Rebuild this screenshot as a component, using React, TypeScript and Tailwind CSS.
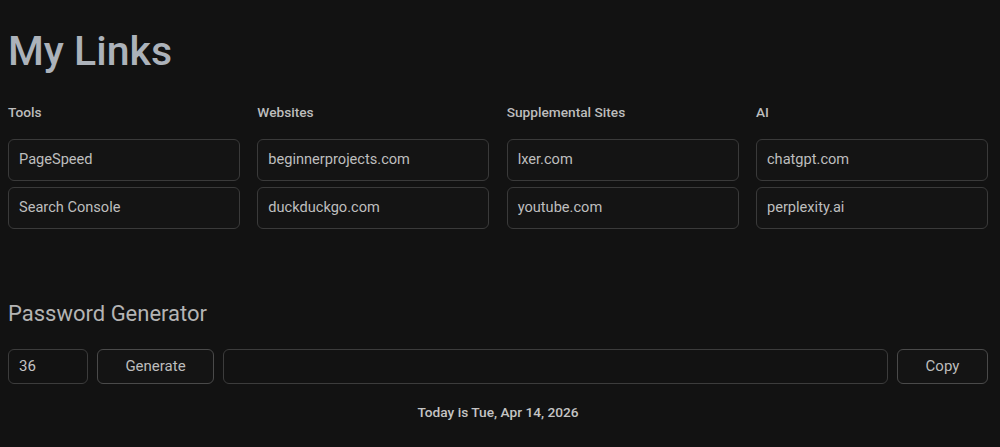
const groups = [
  { title: "Tools", links: ["PageSpeed", "Search Console"] },
  { title: "Websites", links: ["beginnerprojects.com", "duckduckgo.com"] },
  { title: "Supplemental Sites", links: ["lxer.com", "youtube.com"] },
  { title: "AI", links: ["chatgpt.com", "perplexity.ai"] },
];

export default function App() {
  return (
    <div
      className="min-h-screen bg-[#121212] pl-2 pr-3 pt-[26px]"
      style={{ fontFamily: "Roboto, 'Liberation Sans', sans-serif" }}
    >
      <h1 className="text-[41px] leading-[50px] font-medium text-[#acb2ba]">My Links</h1>

      <div className="mt-[26px] grid grid-cols-4 gap-x-[17.33px]">
        {groups.map((group) => (
          <div key={group.title}>
            <h2 className="text-[13.7px] leading-[20px] font-medium text-[#bdbdbd]">{group.title}</h2>
            <div className="mt-[17px] flex flex-col gap-[6.5px]">
              {group.links.map((link) => (
                <a
                  key={link}
                  href="#"
                  className="flex h-[41.5px] items-center rounded-[6px] border border-[#3a3a3a] bg-[#141414] px-[10px] text-[14.6px] text-[#bebebe]"
                >
                  {link}
                </a>
              ))}
            </div>
          </div>
        ))}
      </div>

      <h2 className="mt-[71px] text-[22px] leading-[28px] text-[#b4b4b4]">Password Generator</h2>

      <div className="mt-[21px] flex h-[35.5px] gap-[9px]">
        <input
          defaultValue="36"
          className="w-[80px] rounded-[6px] border border-[#3c3c3c] bg-[#121212] px-[10px] text-[15px] text-[#c4c4c4] outline-none"
        />
        <button className="w-[117px] rounded-[6px] border border-[#4a4a4a] bg-[#141414] text-[15px] text-[#bdbdbd]">
          Generate
        </button>
        <input className="flex-1 rounded-[6px] border border-[#3c3c3c] bg-[#121212] px-[10px] text-[15px] text-[#c4c4c4] outline-none" />
        <button className="w-[91px] rounded-[6px] border border-[#4a4a4a] bg-[#141414] text-[15px] text-[#bdbdbd]">
          Copy
        </button>
      </div>

      <p className="mt-[18px] text-center text-[13.7px] leading-[20px] font-medium text-[#c4c4c4]">
        Today is Tue, Apr 14, 2026
      </p>
    </div>
  );
}
